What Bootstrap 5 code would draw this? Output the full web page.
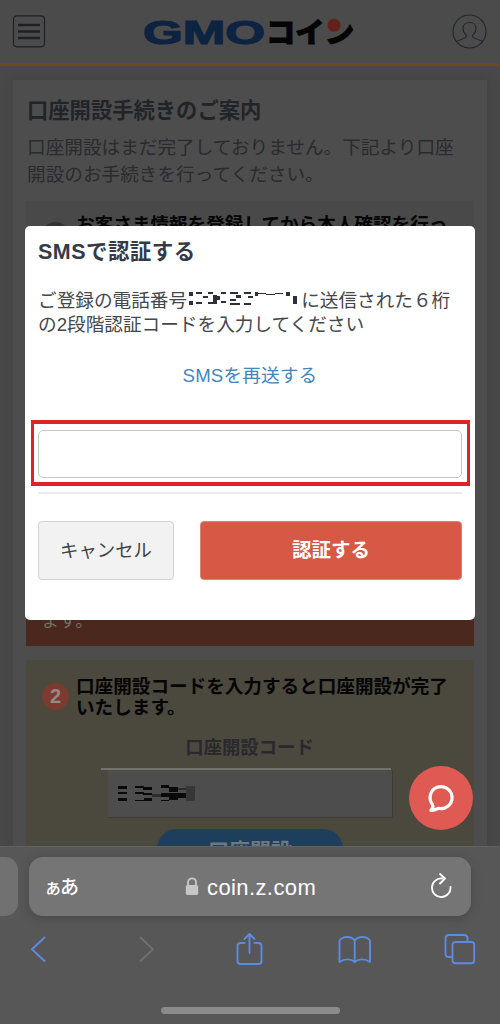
<!DOCTYPE html>
<html lang="ja">
<head>
<meta charset="utf-8">
<meta name="viewport" content="width=device-width, initial-scale=1">
<title>GMOコイン</title>
<link href="https://cdn.jsdelivr.net/npm/bootstrap@5.3.0/dist/css/bootstrap.min.css" rel="stylesheet">
<style>
body{font-family:"Liberation Sans","Noto Sans CJK JP",sans-serif;background:#484848;width:500px;height:1024px;overflow:hidden;font-size:18.65px;color:#26282b}
svg{display:block;flex:none}
.ln{display:block;white-space:nowrap}
.site-head{height:66px;background:#4b4b4b;border-bottom:3px solid #744810;padding:0 13px 0 12px}
.page-area{height:780px;overflow:hidden;padding:14px 13px 0;background:#484848}
.guide{background:#4d4d4d;height:780px;padding:17px 13px 0 14px;box-shadow:0 0 7px #434343}
.guide h1{font-size:21.3px;line-height:28px;font-weight:700;margin:0;color:#212429}
.guide .lead-text{line-height:27px;margin:9px 0 0;color:#292b2e}
.step{width:448px;margin-left:-1px}
.step1{background:#494949;margin-top:13px;height:390px;padding:13px 0 0 16px}
.go{background:#4a281e;height:55px;padding:16px 0 0 15px;color:#737069;line-height:28px;font-size:18px}
.step2{background:#4b483e;margin-top:14px;height:186px;padding:16px 0 0 16px}
.step-title{font-weight:700;color:#050505;line-height:21px;margin-left:7px;font-size:18.6px}
.num{width:27px;height:27px;border-radius:50%;font-size:20px;line-height:27px;text-align:center}
.num1{background:#333;margin-top:8px}
.num2{background:#7b3b2f;color:#948b87;margin-top:7px;font-weight:700}
.code-label{font-weight:700;line-height:26px;text-align:center;margin:17px 0 0 -17px;font-size:18.4px;color:#29292d}
.code-line{height:2px;width:290px;background:#72716b;margin:7px 0 0 59px}
.code-box{height:48px;width:285px;margin-left:66px;background:#4d4d4d;border-right:1px solid #3e3d38;border-bottom:1px solid #3e3d38;padding:14px 0 0 9px}
.open-btn{width:186px;height:40px;border-radius:20px;background:#1d3f5b;margin:11px 0 0 115px;color:#6d7880;font-size:21px;font-weight:700;line-height:43px;text-align:center}
.sms{left:24.5px;top:226px;width:450.5px;height:393.5px;background:#fff;border-radius:5px;padding:10px 13px 0 13.5px;color:#44474b}
.sms h2{font-size:21.5px;letter-spacing:.45px;line-height:32px;font-weight:700;margin:0;color:#343b47}
.sms p{line-height:24px;margin:21px 0 0}
.resend{color:#4186bd;text-decoration:none;display:block;text-align:center;line-height:28px;margin-top:25px;letter-spacing:.15px}
.focus-frame{border:solid #e0202b;border-width:4px 3px;height:66px;margin:30px -8px 0 -7px;padding:6px 5px 0 4px}
.focus-frame input{height:48px;width:424px;border:1px solid #c9c9c9;border-radius:5px;padding:0 10px}
.sep{height:2px;background:#eaeaea;margin:6px 0 27px}
.bt{height:59px;border-radius:4px;padding:0;font-size:18.4px}
.bt-c{width:136px;background:#f2f2f2;border:1.5px solid #d2d2d2;color:#444}
.bt-s{width:262px;background:#d65845;border:1px solid #d98475;color:#fff;font-weight:700;font-size:19.5px}
.chat{left:409px;top:766px;width:64px;height:64px;border-radius:50%;background:#df5a52}
.browser{height:178px;background:#575757;border-top:1px solid #626262}
.tab-row{margin-top:10px;height:59px}
.tab-prev{width:18px;background:#717171;border-radius:0 13px 13px 0}
.urlbar{width:442px;margin-left:11px;background:#757575;border-radius:14px;box-shadow:0 2px 9px #484848;color:#fff;padding:0 17px}
.lang{font-family:"Noto Sans CJK JP",sans-serif;font-weight:500;width:34px;white-space:nowrap}
.lang-small{font-size:18px;margin:0 -2px 0 -2px}
.lang-large{font-size:19px}
.host{font-size:22px;margin-left:8px;letter-spacing:.4px;line-height:24px;padding-top:2px}
.home-bar{width:179px;height:7px;border-radius:4px;background:#8b8b8b;margin:31px 0 0 161px}
</style>
</head>
<body>
<header class="site-head d-flex justify-content-between align-items-start">
  <svg width="34" height="50" fill="none" stroke="#1c2127"><rect x="1.5" y="15.800" width="31" height="31" rx="3.500" stroke-width="1.200"/><path d="M6 25H28M6 31.500H28M6 38H28" stroke-width="2.500"/></svg>
  <svg width="220" height="54" style="margin-left:9px"><g font-weight="700">
    <text x="0" y="43.500" font-family="Liberation Sans" font-size="33" textLength="122" lengthAdjust="spacingAndGlyphs" fill="#0c2442" stroke="#0c2442" stroke-width="1.200">GMO</text>
    <text x="123" y="43" font-family="Noto Sans CJK JP" font-weight="900" font-size="28" textLength="88" lengthAdjust="spacingAndGlyphs" fill="#050505" stroke="#050505" stroke-width="1">コイン</text></g>
    <circle cx="191" cy="25.300" r="6.800" fill="#642018" stroke="#4b4b4b" stroke-width=".6"/></svg>
  <svg width="36" height="50" fill="none" stroke="#24282e" stroke-width="1.200"><circle cx="18.500" cy="31.500" r="16.500"/><path d="M5.500 41.500C9 39.500 14.500 38.500 15.500 36.500C15.800 34.500 12 33.500 12 28.500C12 20.500 25 20.500 25 28.500C25 33.500 21.200 34.500 21.500 36.500C22.500 38.500 28 39.500 31.500 41.500"/></svg>
</header>
<main class="page-area">
  <div class="guide">
    <h1>口座開設手続きのご案内</h1>
    <p class="lead-text"><span class="ln">口座開設はまだ完了しておりません。下記より口座</span><span class="ln">開設のお手続きを行ってください。</span></p>
    <section class="step step1 d-flex align-items-start"><span class="num num1"></span><span class="step-title ln">お客さま情報を登録してから本人確認を行っ</span></section>
    <div class="step go">ます。</div>
    <section class="step step2">
      <div class="d-flex"><span class="num num2">2</span><div class="step-title"><span class="ln">口座開設コードを入力すると口座開設が完了</span><span class="ln">いたします。</span></div></div>
      <div class="code-label">口座開設コード</div>
      <div class="code-line"></div>
      <div class="code-box"><svg width="80" height="20"><path fill="#090909" d="M1 2h9v3H1zM1 8h9v2H1zM1 14h9v3H1zM18 2h9v1h8v3h-9V4h-8zM18 8h9v1h8v2h-9v-1h-8zM18 16h9v-2h8v3H18zM44 1h8v2h9v5h-9V4h-8zM44 9h25v5h-8v2h-9v-3h-8zM44 16h8v1h-8z"/><path fill="#2c2c2c" d="M35 10h9v3h-9zM61 4h8v2h-8z"/><path fill="#373737" d="M69 2h9v15h-9z"/></svg></div>
      <div class="open-btn">口座開設</div>
    </section>
  </div>
</main>
<footer class="browser">
  <div class="tab-row d-flex">
    <div class="tab-prev"></div>
    <div class="urlbar d-flex align-items-center">
      <span class="lang"><span class="lang-small">ぁ</span><span class="lang-large">あ</span></span>
      <svg width="14" height="19" style="margin-left:105px"><path fill="none" stroke="#c7c7c7" stroke-width="1.800" d="M3 9V5.500C3 0 11 0 11 5.500V9"/><rect x=".8" y="8" width="12.400" height="10" rx="1.800" fill="#c7c7c7"/></svg>
      <span class="host">coin.z.com</span>
      <svg class="ms-auto" width="24" height="28" fill="none" stroke="#fff" stroke-width="1.800" stroke-linecap="round" stroke-linejoin="round"><path d="M12 5.500A9.300 9.300 0 1 0 20.500 14M10 1L15 5.500 10 10.500"/></svg>
    </div>
  </div>
  <svg width="500" height="60" fill="none" stroke="#5d8be0" stroke-width="1.900" stroke-linejoin="round" stroke-linecap="round">
    <path d="M44.500 21.500L32 33.300 44.500 45"/><path stroke="#707070" d="M140.500 21.500L153 33.300 140.500 45"/>
    <path d="M244.500 27H240.500Q237.500 27 237.500 30V45Q237.500 48 240.500 48H258.500Q261.500 48 261.500 45V30Q261.500 27 258.500 27H254.500M249.500 37V18M244.500 23L249.500 18 254.500 23"/>
    <path d="M339.500 46V24.500C343 20 351 19.500 354.700 24.500C358.400 19.500 366.500 20 370 24.500V46C365 42.500 358.500 42.500 354.700 46C351 42.500 344.500 42.500 339.500 46ZM354.700 24.500V46"/>
    <path d="M452 41H449Q445.500 41 445.500 37.500V22.500Q445.500 19 449 19H464Q467.500 19 467.500 22.500V26"/><rect x="452.500" y="26" width="21.700" height="21.300" rx="3"/>
  </svg>
  <div class="home-bar"></div>
</footer>
<section class="sms position-absolute">
  <h2>SMSで認証する</h2>
  <p><span class="ln d-flex">ご登録の電話番号<svg width="114" height="24" fill="#2c3038"><path d="M2 3h4v4H2zM2 12h4v4H2zM9 3h6v2H9zM9 13h6v2H9zM16 7h5v2h-5zM21 3h5v2h-5zM26 6h4v9h-4zM30 7h3v4h-3zM21 13h5v2h-5zM34 3h5v2h-5zM34 12h5v2h-5zM43 3h8v2h-8zM49 6h5v3h-5zM43 10h6v2H43zM43 14h10v2H43zM57 3h7v2h-7zM61 7h5v2h-5zM57 14h7v2h-7zM68 3h3v4h-3zM71 4h8v1h-8zM79 5h9v1h-9zM88 4h8v1h-8zM99 3h4v4h-4zM106 7h4v8h-4z"/></svg>に送信された６桁</span><span class="ln">の2段階認証コードを入力してください</span></p>
  <a class="resend" href="#">SMSを再送する</a>
  <div class="focus-frame"><input type="text" class="d-block" aria-label="認証コード"></div>
  <div class="sep"></div>
  <div class="d-flex justify-content-between"><button class="btn bt bt-c">キャンセル</button><button class="btn bt bt-s">認証する</button></div>
</section>
<button class="chat position-absolute border-0 p-0" aria-label="chat"><svg width="64" height="64" fill="none" stroke="#fff" stroke-width="3.200" stroke-linejoin="round"><path d="M23.500 38.500A11 11 0 1 1 29.500 42.300C27 43.500 24 44.500 22 44.300C23.500 43 24.500 41 23.500 38.500Z"/></svg></button>
<script src="https://cdn.jsdelivr.net/npm/bootstrap@5.3.0/dist/js/bootstrap.bundle.min.js"></script>
</body>
</html>
